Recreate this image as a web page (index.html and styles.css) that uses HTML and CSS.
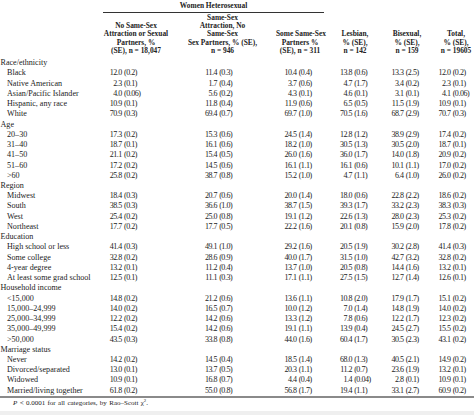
FILE: index.html
```html
<!DOCTYPE html>
<html lang="en">
<head>
<meta charset="utf-8">
<title>Table</title>
<link rel="stylesheet" href="styles.css">
</head>
<body>
<div class="wrap">
<table class="tbl">
<colgroup>
<col class="c0"><col class="c1"><col class="c2"><col class="c3"><col class="c4"><col class="c5"><col class="c6">
</colgroup>
<thead>
<tr class="h1"><th></th><th colspan="3" class="grp">Women Heterosexual</th><th></th><th></th><th></th></tr>
<tr class="h2"><th></th><th>No Same-Sex<br>Attraction or Sexual<br>Partners, %<br>(SE), n = 18,047</th><th>Same-Sex<br>Attraction, No<br>Same-Sex<br>Sex Partners, % (SE),<br>n = 946</th><th>Some Same-Sex<br>Partners %<br>(SE), n = 311</th><th>Lesbian,<br>% (SE),<br>n = 142</th><th>Bisexual,<br>% (SE),<br>n = 159</th><th>Total,<br>% (SE),<br>n = 19605</th></tr>
</thead>
<tbody>
<tr class="cat"><td>Race/ethnicity</td><td></td><td></td><td></td><td></td><td></td><td></td></tr>
<tr><td>Black</td><td><span class="i">12</span>.0 (0.2)</td><td><span class="i">11</span>.4 (0.3)</td><td><span class="i">10</span>.4 (0.4)</td><td><span class="i">13</span>.8 (0.6)</td><td><span class="i">13</span>.3 (2.5)</td><td><span class="i">12</span>.0 (0.2)</td></tr>
<tr><td>Native American</td><td><span class="i">2</span>.3 (0.1)</td><td><span class="i">1</span>.7 (0.4)</td><td><span class="i">3</span>.7 (0.6)</td><td><span class="i">4</span>.7 (1.7)</td><td><span class="i">3</span>.4 (0.2)</td><td><span class="i">2</span>.3 (0.1)</td></tr>
<tr><td>Asian/Pacific Islander</td><td><span class="i">4</span>.0 (0.06)</td><td><span class="i">5</span>.6 (0.2)</td><td><span class="i">4</span>.3 (0.1)</td><td><span class="i">4</span>.6 (0.1)</td><td><span class="i">3</span>.1 (0.1)</td><td><span class="i">4</span>.1 (0.06)</td></tr>
<tr><td>Hispanic, any race</td><td><span class="i">10</span>.9 (0.1)</td><td><span class="i">11</span>.8 (0.4)</td><td><span class="i">11</span>.9 (0.6)</td><td><span class="i">6</span>.5 (0.5)</td><td><span class="i">11</span>.5 (1.9)</td><td><span class="i">10</span>.9 (0.1)</td></tr>
<tr><td>White</td><td><span class="i">70</span>.9 (0.3)</td><td><span class="i">69</span>.4 (0.7)</td><td><span class="i">69</span>.7 (1.0)</td><td><span class="i">70</span>.5 (1.6)</td><td><span class="i">68</span>.7 (2.9)</td><td><span class="i">70</span>.7 (0.3)</td></tr>
<tr class="cat"><td>Age</td><td></td><td></td><td></td><td></td><td></td><td></td></tr>
<tr><td>20–30</td><td><span class="i">17</span>.3 (0.2)</td><td><span class="i">15</span>.3 (0.6)</td><td><span class="i">24</span>.5 (1.4)</td><td><span class="i">12</span>.8 (1.2)</td><td><span class="i">38</span>.9 (2.9)</td><td><span class="i">17</span>.4 (0.2)</td></tr>
<tr><td>31–40</td><td><span class="i">18</span>.7 (0.1)</td><td><span class="i">16</span>.1 (0.6)</td><td><span class="i">18</span>.2 (1.0)</td><td><span class="i">30</span>.5 (1.3)</td><td><span class="i">30</span>.5 (2.0)</td><td><span class="i">18</span>.7 (0.1)</td></tr>
<tr><td>41–50</td><td><span class="i">21</span>.1 (0.2)</td><td><span class="i">15</span>.4 (0.5)</td><td><span class="i">26</span>.0 (1.6)</td><td><span class="i">36</span>.0 (1.7)</td><td><span class="i">14</span>.0 (1.8)</td><td><span class="i">20</span>.9 (0.2)</td></tr>
<tr><td>51–60</td><td><span class="i">17</span>.2 (0.2)</td><td><span class="i">14</span>.5 (0.6)</td><td><span class="i">16</span>.1 (1.1)</td><td><span class="i">16</span>.1 (0.6)</td><td><span class="i">10</span>.1 (1.1)</td><td><span class="i">17</span>.0 (0.2)</td></tr>
<tr><td>&gt;60</td><td><span class="i">25</span>.8 (0.2)</td><td><span class="i">38</span>.7 (0.8)</td><td><span class="i">15</span>.2 (1.0)</td><td><span class="i">4</span>.7 (1.1)</td><td><span class="i">6</span>.4 (1.0)</td><td><span class="i">26</span>.0 (0.2)</td></tr>
<tr class="cat"><td>Region</td><td></td><td></td><td></td><td></td><td></td><td></td></tr>
<tr><td>Midwest</td><td><span class="i">18</span>.4 (0.3)</td><td><span class="i">20</span>.7 (0.6)</td><td><span class="i">20</span>.0 (1.4)</td><td><span class="i">18</span>.0 (0.6)</td><td><span class="i">22</span>.8 (2.2)</td><td><span class="i">18</span>.6 (0.2)</td></tr>
<tr><td>South</td><td><span class="i">38</span>.5 (0.3)</td><td><span class="i">36</span>.6 (1.0)</td><td><span class="i">38</span>.7 (1.5)</td><td><span class="i">39</span>.3 (1.7)</td><td><span class="i">33</span>.2 (2.3)</td><td><span class="i">38</span>.3 (0.3)</td></tr>
<tr><td>West</td><td><span class="i">25</span>.4 (0.2)</td><td><span class="i">25</span>.0 (0.8)</td><td><span class="i">19</span>.1 (1.2)</td><td><span class="i">22</span>.6 (1.3)</td><td><span class="i">28</span>.0 (2.3)</td><td><span class="i">25</span>.3 (0.2)</td></tr>
<tr><td>Northeast</td><td><span class="i">17</span>.7 (0.2)</td><td><span class="i">17</span>.7 (0.5)</td><td><span class="i">22</span>.2 (1.6)</td><td><span class="i">20</span>.1 (0.8)</td><td><span class="i">15</span>.9 (2.0)</td><td><span class="i">17</span>.8 (0.2)</td></tr>
<tr class="cat"><td>Education</td><td></td><td></td><td></td><td></td><td></td><td></td></tr>
<tr><td>High school or less</td><td><span class="i">41</span>.4 (0.3)</td><td><span class="i">49</span>.1 (1.0)</td><td><span class="i">29</span>.2 (1.6)</td><td><span class="i">20</span>.5 (1.9)</td><td><span class="i">30</span>.2 (2.8)</td><td><span class="i">41</span>.4 (0.3)</td></tr>
<tr><td>Some college</td><td><span class="i">32</span>.8 (0.2)</td><td><span class="i">28</span>.6 (0.9)</td><td><span class="i">40</span>.0 (1.7)</td><td><span class="i">31</span>.5 (1.0)</td><td><span class="i">42</span>.7 (3.2)</td><td><span class="i">32</span>.8 (0.2)</td></tr>
<tr><td>4-year degree</td><td><span class="i">13</span>.2 (0.1)</td><td><span class="i">11</span>.2 (0.4)</td><td><span class="i">13</span>.7 (1.0)</td><td><span class="i">20</span>.5 (0.8)</td><td><span class="i">14</span>.4 (1.6)</td><td><span class="i">13</span>.2 (0.1)</td></tr>
<tr><td>At least some grad school</td><td><span class="i">12</span>.5 (0.1)</td><td><span class="i">11</span>.1 (0.3)</td><td><span class="i">17</span>.1 (1.1)</td><td><span class="i">27</span>.5 (1.5)</td><td><span class="i">12</span>.7 (1.4)</td><td><span class="i">12</span>.6 (0.1)</td></tr>
<tr class="cat"><td>Household income</td><td></td><td></td><td></td><td></td><td></td><td></td></tr>
<tr><td>&lt;15,000</td><td><span class="i">14</span>.8 (0.2)</td><td><span class="i">21</span>.2 (0.6)</td><td><span class="i">13</span>.6 (1.1)</td><td><span class="i">10</span>.8 (2.0)</td><td><span class="i">17</span>.9 (1.7)</td><td><span class="i">15</span>.1 (0.2)</td></tr>
<tr><td>15,000–24,999</td><td><span class="i">14</span>.0 (0.2)</td><td><span class="i">16</span>.5 (0.7)</td><td><span class="i">10</span>.0 (1.2)</td><td><span class="i">7</span>.0 (1.4)</td><td><span class="i">14</span>.8 (1.9)</td><td><span class="i">14</span>.0 (0.2)</td></tr>
<tr><td>25,000–34,999</td><td><span class="i">12</span>.2 (0.2)</td><td><span class="i">14</span>.2 (0.6)</td><td><span class="i">13</span>.3 (1.2)</td><td><span class="i">7</span>.8 (0.6)</td><td><span class="i">12</span>.2 (1.7)</td><td><span class="i">12</span>.3 (0.2)</td></tr>
<tr><td>35,000–49,999</td><td><span class="i">15</span>.4 (0.2)</td><td><span class="i">14</span>.2 (0.6)</td><td><span class="i">19</span>.1 (1.1)</td><td><span class="i">13</span>.9 (0.4)</td><td><span class="i">24</span>.5 (2.7)</td><td><span class="i">15</span>.5 (0.2)</td></tr>
<tr><td>&gt;50,000</td><td><span class="i">43</span>.5 (0.3)</td><td><span class="i">33</span>.8 (0.8)</td><td><span class="i">44</span>.0 (1.6)</td><td><span class="i">60</span>.4 (1.7)</td><td><span class="i">30</span>.5 (2.3)</td><td><span class="i">43</span>.1 (0.2)</td></tr>
<tr class="cat"><td>Marriage status</td><td></td><td></td><td></td><td></td><td></td><td></td></tr>
<tr><td>Never</td><td><span class="i">14</span>.2 (0.2)</td><td><span class="i">14</span>.5 (0.4)</td><td><span class="i">18</span>.5 (1.4)</td><td><span class="i">68</span>.0 (1.3)</td><td><span class="i">40</span>.5 (2.1)</td><td><span class="i">14</span>.9 (0.2)</td></tr>
<tr><td>Divorced/separated</td><td><span class="i">13</span>.0 (0.1)</td><td><span class="i">13</span>.7 (0.5)</td><td><span class="i">20</span>.3 (1.1)</td><td><span class="i">11</span>.2 (0.7)</td><td><span class="i">23</span>.6 (1.9)</td><td><span class="i">13</span>.2 (0.1)</td></tr>
<tr><td>Widowed</td><td><span class="i">10</span>.9 (0.1)</td><td><span class="i">16</span>.8 (0.7)</td><td><span class="i">4</span>.4 (0.4)</td><td><span class="i">1</span>.4 (0.04)</td><td><span class="i">2</span>.8 (0.1)</td><td><span class="i">10</span>.9 (0.1)</td></tr>
<tr><td>Married/living together</td><td><span class="i">61</span>.8 (0.2)</td><td><span class="i">55</span>.0 (0.8)</td><td><span class="i">56</span>.8 (1.7)</td><td><span class="i">19</span>.4 (1.1)</td><td><span class="i">33</span>.1 (2.7)</td><td><span class="i">60</span>.9 (0.2)</td></tr>
</tbody>
</table>
<div class="rule"></div>
<p class="note"><i>P</i> &lt; 0.0001 for all categories, by Rao–Scott χ<sup>2</sup>.</p>
<div class="band"></div>
</div>
</body>
</html>
```

FILE: styles.css
```css
html, body {
  margin: 0;
  padding: 0;
  background: #ffffff;
}

.wrap {
  width: 474px;
  height: 415px;
  overflow: hidden;
  font-family: "Liberation Serif", "Times New Roman", serif;
  color: #222222;
}

.tbl {
  width: 484px;
  table-layout: fixed;
  border-collapse: separate;
  border-spacing: 0;
}

.c0 { width: 103px; }
.c1 { width: 66px; }
.c2 { width: 107px; }
.c3 { width: 48px; }
.c4 { width: 62px; }
.c5 { width: 42px; }
.c6 { width: 56px; }

.tbl th {
  padding: 0;
  font-weight: bold;
  font-size: 7.4px;
  line-height: 8.3px;
  text-align: center;
  white-space: nowrap;
  overflow: visible;
}

.h1 th {
  height: 12px;
  vertical-align: middle;
}

.h1 .grp {
  border-bottom: 1px solid #333333;
}

.h2 th {
  height: 42.2px;
  vertical-align: bottom;
  padding-bottom: 3px;
}

.tbl td {
  padding: 0;
  height: 10.24px;
  line-height: 10.24px;
  font-size: 8px;
  white-space: nowrap;
  overflow: visible;
  text-align: left;
  letter-spacing: -0.45px;
  word-spacing: 0.5px;
}

.tbl td:first-child {
  padding-left: 7px;
  font-size: 8.1px;
  letter-spacing: 0;
  word-spacing: 0;
}

.tbl .cat td:first-child {
  padding-left: 0.5px;
}

.i {
  display: inline-block;
  width: 7.2px;
  text-align: right;
}

.tbl td:nth-child(2) { padding-left: 6.6px; }
.tbl td:nth-child(3) { padding-left: 35.8px; }
.tbl td:nth-child(4) { padding-left: 8.3px; }
.tbl td:nth-child(5) { padding-left: 15.8px; }
.tbl td:nth-child(6) { padding-left: 5.3px; }
.tbl td:nth-child(7) { padding-left: 10.3px; }

.rule {
  height: 0;
  border-top: 2px solid #8a8a8a;
}

.note {
  margin: 0;
  height: 12.7px;
  padding-left: 13px;
  font-size: 7px;
  line-height: 11px;
  word-spacing: 0.6px;
}

.note sup {
  font-size: 4.8px;
  line-height: 0;
}

.band {
  height: 10px;
  background: #efefef;
}
```
